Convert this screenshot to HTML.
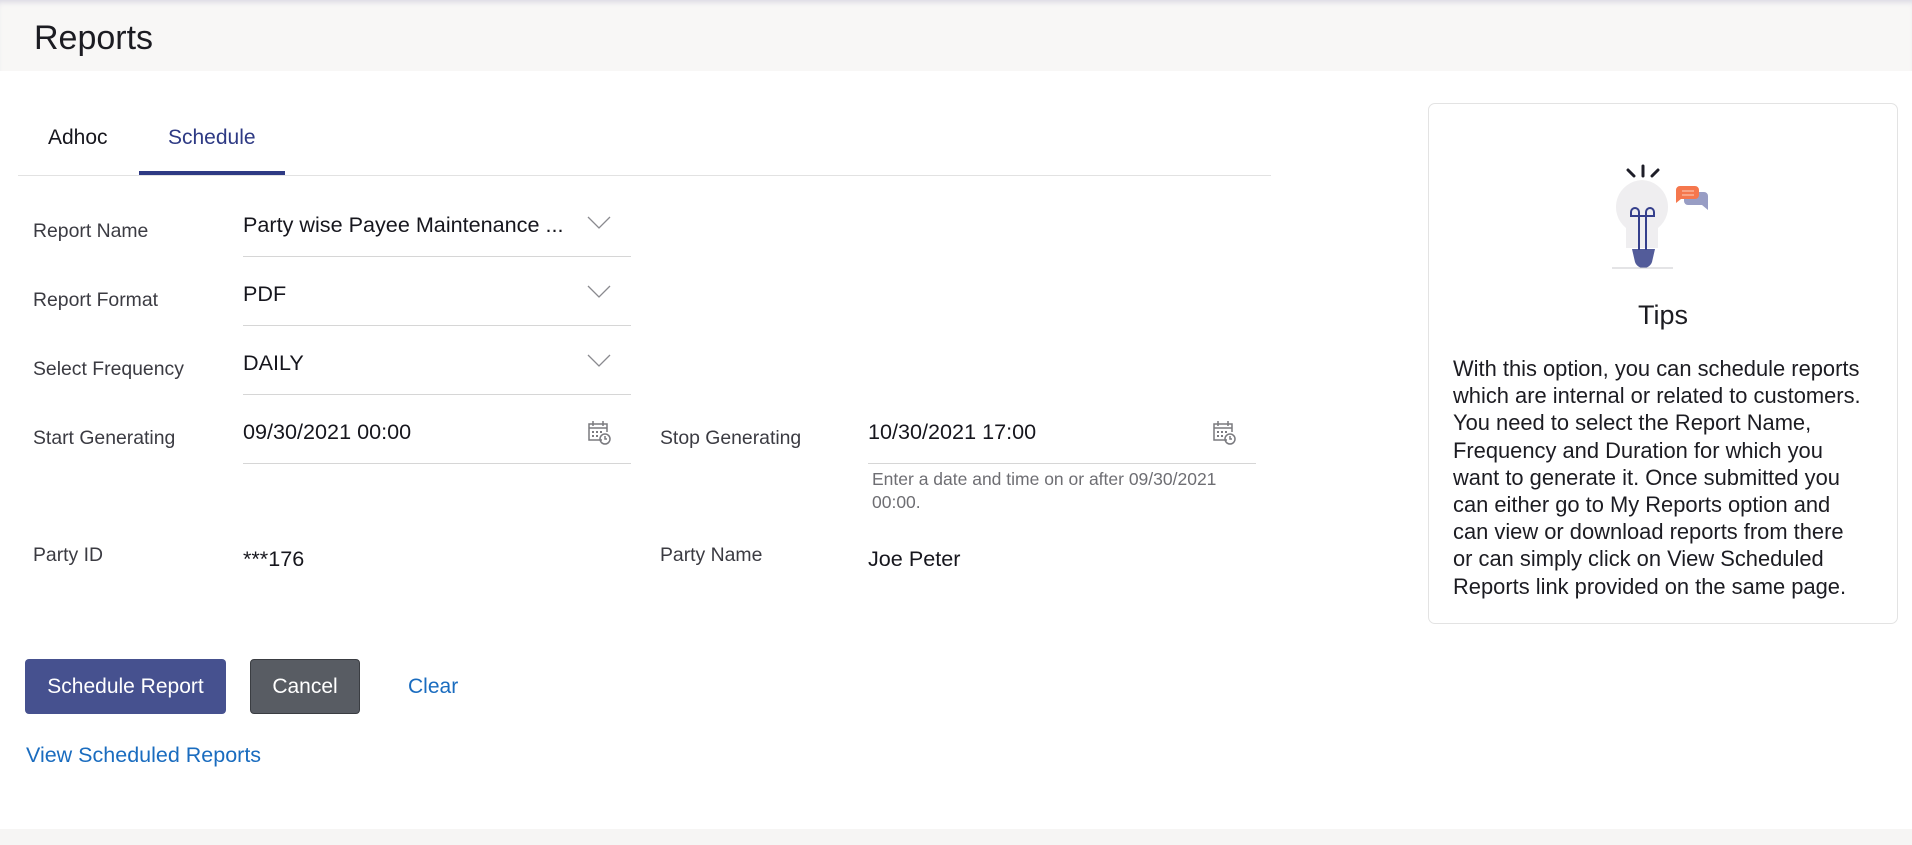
<!DOCTYPE html>
<html><head><meta charset="utf-8"><style>
*{margin:0;padding:0;box-sizing:border-box}
body{width:1912px;height:845px;position:relative;background:#fff;font-family:"Liberation Sans",sans-serif;color:#1f1f24;overflow:hidden}
.a{position:absolute;white-space:nowrap}
.lbl{font-size:19.4px;color:#3b3b42}
.val{font-size:21.6px;color:#16161d}
.ul{position:absolute;height:1px;background:#d6d6d6}
.chev{position:absolute;width:24px;height:14px}
.cal{position:absolute;width:24px;height:25px}
</style></head><body>
<div class="a" style="left:0;top:0;width:1912px;height:71px;background:#f8f7f6;box-shadow:inset 0 5px 6px -3px #d8d6e2"></div>
<div class="a" style="left:34px;top:19px;font-size:34px;color:#1c1c22">Reports</div>

<div class="a" style="left:48px;top:126px;font-size:21px;color:#16161d">Adhoc</div>
<div class="a" style="left:168px;top:126px;font-size:21px;color:#2e3a84">Schedule</div>
<div class="a" style="left:18px;top:175px;width:1253px;height:1px;background:#e2e2e2"></div>
<div class="a" style="left:139px;top:171px;width:146px;height:4px;background:#2e3a84"></div>

<div class="a lbl" style="left:33px;top:220px">Report Name</div>
<div class="a val" style="left:243px;top:212px">Party wise Payee Maintenance ...</div>
<div class="ul" style="left:243px;top:256px;width:388px"></div>
<div class="a lbl" style="left:33px;top:289px">Report Format</div>
<div class="a val" style="left:243px;top:281px">PDF</div>
<div class="ul" style="left:243px;top:325px;width:388px"></div>
<div class="a lbl" style="left:33px;top:358px">Select Frequency</div>
<div class="a val" style="left:243px;top:350px">DAILY</div>
<div class="ul" style="left:243px;top:394px;width:388px"></div>
<div class="a lbl" style="left:33px;top:427px">Start Generating</div>
<div class="a val" style="left:243px;top:419px">09/30/2021 00:00</div>
<div class="ul" style="left:243px;top:463px;width:388px"></div>
<div class="a lbl" style="left:660px;top:427px">Stop Generating</div>
<div class="a val" style="left:868px;top:419px">10/30/2021 17:00</div>
<div class="ul" style="left:868px;top:463px;width:388px"></div>
<div class="a" style="left:872px;top:468px;font-size:17.5px;color:#6e6e73;line-height:23px">Enter a date and time on or after 09/30/2021<br>00:00.</div>
<div class="a lbl" style="left:33px;top:544px">Party ID</div>
<div class="a val" style="left:243px;top:546px">***176</div>
<div class="a lbl" style="left:660px;top:544px">Party Name</div>
<div class="a val" style="left:868px;top:546px">Joe Peter</div>

<svg class="chev" style="left:587px;top:216px" viewBox="0 0 24 14"><path d="M1 1l11 11L23 1" fill="none" stroke="#8a8a8f" stroke-width="1.3"/></svg>
<svg class="chev" style="left:587px;top:285px" viewBox="0 0 24 14"><path d="M1 1l11 11L23 1" fill="none" stroke="#8a8a8f" stroke-width="1.3"/></svg>
<svg class="chev" style="left:587px;top:354px" viewBox="0 0 24 14"><path d="M1 1l11 11L23 1" fill="none" stroke="#8a8a8f" stroke-width="1.3"/></svg>
<svg class="cal" style="left:587px;top:420px" viewBox="0 0 24 25"><g fill="none" stroke="#7a7a7f" stroke-width="1.5"><path d="M15 20H2V4h18v8"/><path d="M2 8h18M6 1v5M16 1v5"/><circle cx="18" cy="19" r="5"/><path d="M18 16v3h2"/></g><g fill="#7a7a7f"><rect x="5" y="11" width="2" height="2"/><rect x="9" y="11" width="2" height="2"/><rect x="13" y="11" width="2" height="2"/><rect x="5" y="15" width="2" height="2"/><rect x="9" y="15" width="2" height="2"/></g></svg>
<svg class="cal" style="left:1212px;top:420px" viewBox="0 0 24 25"><g fill="none" stroke="#7a7a7f" stroke-width="1.5"><path d="M15 20H2V4h18v8"/><path d="M2 8h18M6 1v5M16 1v5"/><circle cx="18" cy="19" r="5"/><path d="M18 16v3h2"/></g><g fill="#7a7a7f"><rect x="5" y="11" width="2" height="2"/><rect x="9" y="11" width="2" height="2"/><rect x="13" y="11" width="2" height="2"/><rect x="5" y="15" width="2" height="2"/><rect x="9" y="15" width="2" height="2"/></g></svg>

<div class="a" style="left:25px;top:659px;width:201px;height:55px;background:#46518f;border-radius:4px;color:#fff;font-size:21px;text-align:center;line-height:55px">Schedule Report</div>
<div class="a" style="left:250px;top:659px;width:110px;height:55px;background:#585c63;border:1px solid #3a3d42;border-radius:4px;color:#fff;font-size:21px;text-align:center;line-height:53px">Cancel</div>
<div class="a" style="left:408px;top:675px;font-size:21px;color:#1a6cbf">Clear</div>
<div class="a" style="left:26px;top:743px;font-size:21.5px;color:#1a6cbf">View Scheduled Reports</div>
<div class="a" style="left:0;top:829px;width:1912px;height:16px;background:#f6f5f4"></div>

<div class="a" style="left:1428px;top:103px;width:470px;height:521px;border:1px solid #e3e3e3;border-radius:7px"></div>
<svg class="a" style="left:1600px;top:160px" width="112" height="112" viewBox="1600 160 112 112">
<g stroke="#1e1e28" stroke-width="3" stroke-linecap="round"><path d="M1643 166v10M1628 170l6 6M1658 170l-6 6"/></g>
<path d="M1642 180a27 27 0 0 0-16 48v20h32v-20a27 27 0 0 0-16-48z" fill="#efeef0"/>
<path d="M1632 249h23l-3 13a9 9 0 0 1-17 0z" fill="#535c9a"/>
<g fill="none" stroke="#353f8c" stroke-width="2"><path d="M1639 250v-34h-8v-4a4 4 0 0 1 8 0v4M1646 250v-34h8v-4a4 4 0 0 0-8 0v4"/><path d="M1631 216h23"/></g>
<path d="M1612 268h61" stroke="#c8c8cc" stroke-width="1"/>
<path d="M1688 192h16a4 4 0 0 1 4 4v14l-6-5h-14a4 4 0 0 1-4-4v-5a4 4 0 0 1 4-4z" fill="#989dc4"/>
<path d="M1680 186h15a4 4 0 0 1 4 4v5a4 4 0 0 1-4 4h-14l-5 4v-13a4 4 0 0 1 4-4z" fill="#f5774d"/>
<path d="M1682 191h12M1682 195h12" stroke="#fbd0c0" stroke-width="1"/>
</svg>
<div class="a" style="left:1428px;top:300px;width:470px;text-align:center;font-size:27px;color:#1c1c22">Tips</div>
<div class="a" style="left:1453px;top:355px;font-size:21.9px;line-height:27.2px;color:#1c1c22">With this option, you can schedule reports<br>which are internal or related to customers.<br>You need to select the Report Name,<br>Frequency and Duration for which you<br>want to generate it. Once submitted you<br>can either go to My Reports option and<br>can view or download reports from there<br>or can simply click on View Scheduled<br>Reports link provided on the same page.</div>
</body></html>
